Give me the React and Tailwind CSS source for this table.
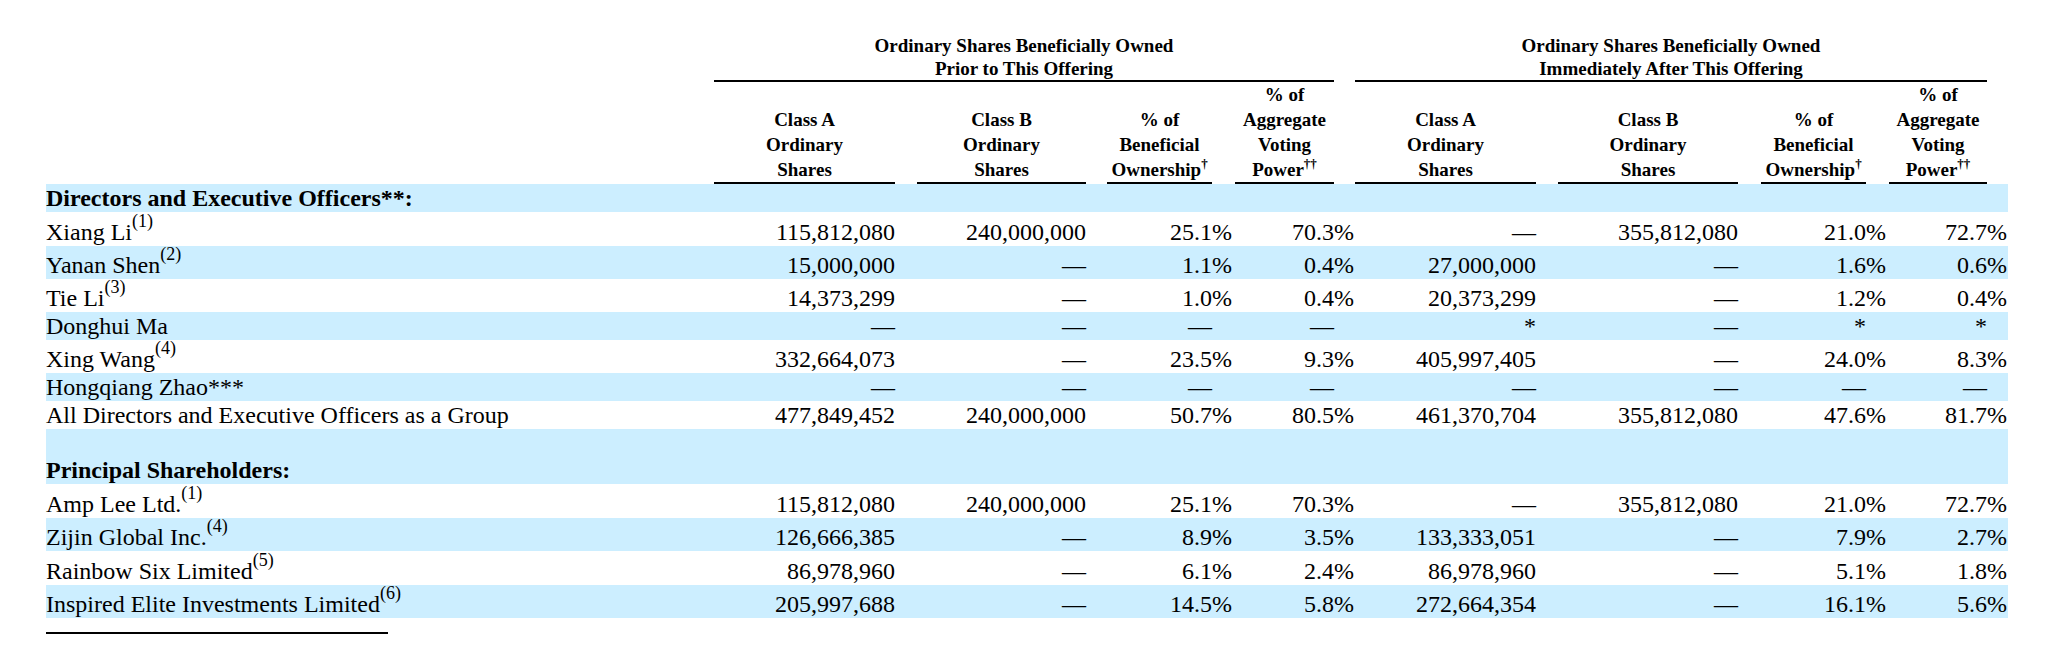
import React from 'react';

const colWidths = ['w-[668px]', 'w-[181px]', 'w-[22px]', 'w-[169px]', 'w-[21px]', 'w-[105px]', 'w-[23px]', 'w-[99px]', 'w-[21px]', 'w-[181px]', 'w-[22px]', 'w-[180px]', 'w-[23px]', 'w-[105px]', 'w-[23px]', 'w-[98px]', 'w-[21px]'];

const D = '—';

const rows = [
	{ section: 'Directors and Executive Officers**:', h: 'h-[28px]' },
	{ label: 'Xiang Li', sup: '(1)', v: ['115,812,080', '240,000,000', '25.1', '70.3', D, '355,812,080', '21.0', '72.7'], h: 'h-[34px]' },
	{ label: 'Yanan Shen', sup: '(2)', v: ['15,000,000', D, '1.1', '0.4', '27,000,000', D, '1.6', '0.6'], h: 'h-[33px]' },
	{ label: 'Tie Li', sup: '(3)', v: ['14,373,299', D, '1.0', '0.4', '20,373,299', D, '1.2', '0.4'], h: 'h-[33px]' },
	{ label: 'Donghui Ma', v: [D, D, D, D, '*', D, '*', '*'], h: 'h-[28px]' },
	{ label: 'Xing Wang', sup: '(4)', v: ['332,664,073', D, '23.5', '9.3', '405,997,405', D, '24.0', '8.3'], h: 'h-[33px]' },
	{ label: 'Hongqiang Zhao***', v: [D, D, D, D, D, D, D, D], h: 'h-[28px]' },
	{ label: 'All Directors and Executive Officers as a Group', v: ['477,849,452', '240,000,000', '50.7', '80.5', '461,370,704', '355,812,080', '47.6', '81.7'], h: 'h-[28px]' },
	{ blank: true, h: 'h-[27px]' },
	{ section: 'Principal Shareholders:', h: 'h-[28px]', keepShade: true },
	{ label: 'Amp Lee Ltd.', sup: '(1)', v: ['115,812,080', '240,000,000', '25.1', '70.3', D, '355,812,080', '21.0', '72.7'], h: 'h-[34px]' },
	{ label: 'Zijin Global Inc.', sup: '(4)', v: ['126,666,385', D, '8.9', '3.5', '133,333,051', D, '7.9', '2.7'], h: 'h-[33px]' },
	{ label: 'Rainbow Six Limited', sup: '(5)', v: ['86,978,960', D, '6.1', '2.4', '86,978,960', D, '5.1', '1.8'], h: 'h-[34px]' },
	{ label: 'Inspired Elite Investments Limited', sup: '(6)', v: ['205,997,688', D, '14.5', '5.8', '272,664,354', D, '16.1', '5.6'], h: 'h-[33px]' },
];

// which rows are shaded
const shaded = [true, false, true, false, true, false, true, false, true, true, false, true, false, true];

const pctIdx = [2, 3, 6, 7];

function ColHead({ lines, mark }) {
	return (
		<td className="p-0 align-bottom">
			<div className="border-b-2 border-black text-center">
				{lines.map((l, i) => (
					<div key={i}>
						{l}
						{i === lines.length - 1 && mark && <sup className="text-[13px] -top-[8px]">{mark}</sup>}
					</div>
				))}
			</div>
		</td>
	);
}

function HeadGroup() {
	return <>
		<ColHead lines={['Class A', 'Ordinary', 'Shares']} />
		<td />
		<ColHead lines={['Class B', 'Ordinary', 'Shares']} />
		<td />
		<ColHead lines={['% of', 'Beneficial', 'Ownership']} mark="†" />
		<td />
		<ColHead lines={['% of', 'Aggregate', 'Voting', 'Power']} mark="††" />
	</>;
}

function ValueCells({ v }) {
	const out = [];
	v.forEach((val, i) => {
		const isPct = pctIdx.includes(i);
		out.push(<td key={'v' + i} className="p-0 text-right align-bottom">{val}</td>);
		const suffix = isPct && val !== D && val !== '*' ? '%' : '';
		out.push(<td key={'g' + i} className="p-0 text-left align-bottom">{suffix}</td>);
	});
	return out;
}

export default function App() {
	return (
		<div className="w-[2048px] h-[664px] bg-white text-black overflow-hidden" style={{ fontFamily: '"Liberation Serif", "Times New Roman", serif' }}>
			<div className="pt-[34px] pl-[46px]">
				<table className="table-fixed border-collapse w-[1962px]">
					<colgroup>
						{colWidths.map((c, i) => <col key={i} className={c} />)}
					</colgroup>
					<thead className="font-bold text-[19px]">
						<tr>
							<td />
							<td colSpan={7} className="p-0 align-bottom">
								<div className="border-b-2 border-black text-center leading-[23px]">
									<div>Ordinary Shares Beneficially Owned</div>
									<div>Prior to This Offering</div>
								</div>
							</td>
							<td />
							<td colSpan={7} className="p-0 align-bottom">
								<div className="border-b-2 border-black text-center leading-[23px]">
									<div>Ordinary Shares Beneficially Owned</div>
									<div>Immediately After This Offering</div>
								</div>
							</td>
							<td />
						</tr>
						<tr className="leading-[25px]">
							<td />
							<HeadGroup />
							<td />
							<HeadGroup />
							<td />
						</tr>
					</thead>
					<tbody className="text-[24px] leading-[28px]">
						{rows.map((r, i) => {
							const bg = shaded[i] ? 'bg-[#cceeff]' : 'bg-white';
							if (r.blank) {
								return <tr key={i} className={`${bg} ${r.h}`}><td colSpan={17} /></tr>;
							}
							if (r.section) {
								return (
									<tr key={i} className={`${bg} ${r.h}`}>
										<td className="p-0 align-bottom font-bold whitespace-nowrap">{r.section}</td>
										<td colSpan={16} />
									</tr>
								);
							}
							return (
								<tr key={i} className={`${bg} ${r.h}`}>
									<td className="p-0 align-bottom whitespace-nowrap">
										{r.label}
										{r.sup && <sup className="text-[18px] -top-[13px]">{r.sup}</sup>}
									</td>
									<ValueCells v={r.v} />
								</tr>
							);
						})}
					</tbody>
				</table>
				<div className="mt-[14px] w-[342px] border-t-2 border-black" />
			</div>
		</div>
	);
}
